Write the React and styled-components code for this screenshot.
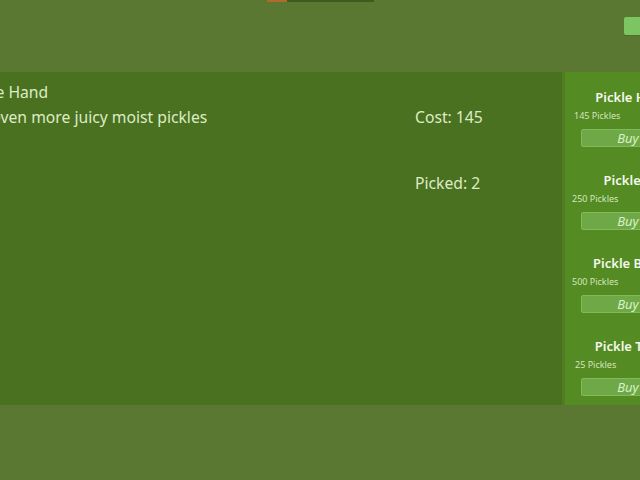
import React from "react";
import styled, { createGlobalStyle } from "styled-components";

const Global = createGlobalStyle`
  html, body { margin: 0; padding: 0; background: #5b7833; overflow: hidden; }
  body { font-family: "Noto Sans", "DejaVu Sans", sans-serif; }
`;

const Page = styled.div`
  width: 760px;
  margin-left: -60px;
  display: flex;
  flex-direction: column;
`;

const TopBar = styled.div`
  height: 72px;
  display: grid;
  grid-template-columns: 1fr auto 1fr;
  align-items: start;
`;

const Progress = styled.div`
  grid-column: 2;
  width: 107px;
  height: 2px;
  background: #3e5a1c;
  display: flex;
`;

const ProgressFill = styled.div`
  height: 100%;
  background: #b2692c;
`;

const TopButton = styled.div`
  grid-column: 3;
  justify-self: end;
  margin-top: 17px;
  margin-right: 6px;
  width: 70px;
  height: 18px;
  border-radius: 2px;
  background: #7dc463;
  box-shadow: 0 1px 0 #4f6e2b;
`;

const Content = styled.div`
  display: flex;
  height: 333px;
`;

const MainPanel = styled.div`
  flex: 1;
  background: #4a711f;
  display: grid;
  grid-template-columns: 475px 1fr;
  padding-top: 9px;
  color: #dcecc6;
  font-size: 15.7px;
  align-content: start;
`;

const Info = styled.div`
  display: flex;
  flex-direction: column;
  gap: 2px;
  padding-left: 22px;
`;

const Line = styled.div`
  line-height: 23px;
  white-space: nowrap;
`;

const Stats = styled.div`
  display: flex;
  flex-direction: column;
  gap: 43px;
  padding-top: 25px;
`;

const Sidebar = styled.div`
  width: 138px;
  flex: none;
  background: #548b23;
  border-left: 3px solid #4f7d21;
  box-sizing: border-box;
  display: flex;
  flex-direction: column;
`;

const Item = styled.div`
  height: 83px;
  padding-top: 17px;
  box-sizing: border-box;
  display: flex;
  flex-direction: column;
`;

const ItemTitle = styled.div`
  text-align: center;
  color: #f4f8ec;
  font-weight: 600;
  font-size: 13px;
  line-height: 16px;
  white-space: nowrap;
`;

const Price = styled.div`
  margin-top: 5px;
  padding-left: ${(p) => p.$indent}px;
  color: #d3e6bd;
  font-size: 9px;
  line-height: 11px;
`;

const BuyButton = styled.div`
  margin: 8px 0 0 16px;
  width: 94px;
  height: 18px;
  box-sizing: border-box;
  border-radius: 2px;
  background: #6fa947;
  border: 1px solid #80bb58;
  color: #d9f0c4;
  font-style: italic;
  font-size: 13px;
  line-height: 16px;
  text-align: center;
`;

const items = [
  { name: "Pickle Hand", price: "145 Pickles", indent: 9 },
  { name: "Pickle Jar", price: "250 Pickles", indent: 7 },
  { name: "Pickle Bottle", price: "500 Pickles", indent: 7 },
  { name: "Pickle Truck", price: "25 Pickles", indent: 10 },
];

export default function App() {
  return (
    <>
      <Global />
      <Page>
        <TopBar>
          <Progress>
            <ProgressFill style={{ width: "19%" }} />
          </Progress>
          <TopButton />
        </TopBar>
        <Content>
          <MainPanel>
            <Info>
              <Line>Pickle Hand</Line>
              <Line>Get even more juicy moist pickles</Line>
            </Info>
            <Stats>
              <Line>Cost: 145</Line>
              <Line>Picked: 2</Line>
            </Stats>
          </MainPanel>
          <Sidebar>
            {items.map((it) => (
              <Item key={it.name}>
                <ItemTitle>{it.name}</ItemTitle>
                <Price $indent={it.indent}>{it.price}</Price>
                <BuyButton>Buy</BuyButton>
              </Item>
            ))}
          </Sidebar>
        </Content>
      </Page>
    </>
  );
}
